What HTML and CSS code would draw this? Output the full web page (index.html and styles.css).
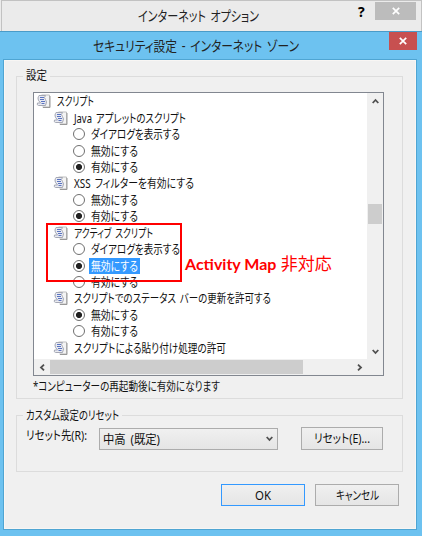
FILE: index.html
```html
<!DOCTYPE html>
<html lang="ja">
<head>
<meta charset="utf-8">
<title>セキュリティ設定 - インターネット ゾーン</title>
<link rel="stylesheet" href="styles.css">
</head>
<body>
<svg class="defs" width="0" height="0">
  <symbol id="script" viewBox="0 0 15 14">
    <path d="M5.500 1h8v12h-7" fill="#f4f4f4" stroke="#bdbdbd"/>
    <path d="M14 2v11.500H7" fill="none" stroke="#999"/>
    <path d="M3 1.500h6.500q-2 2 0 4t0 6H2.500q-2-.5-1-2.500h3q-3-3-2.500-5T3 1.500z" fill="#e8eaf2" stroke="#a5a8b4"/>
    <path d="M4 3.500h4M4 5.500h4M5 7.500h4M5.500 9.500h3" stroke="#5a73c0" stroke-width="1.100"/>
  </symbol>
</svg>
<main class="screen">
  <header class="back">
    <svg class="title" width="121" height="20"><text y="15" textLength="121" lengthAdjust="spacingAndGlyphs">インターネット オプション</text></svg>
    <b class="help">?</b>
    <span class="close gray"><svg width="8" height="8" viewBox="0 0 8 8"><path d="M.8.8l6.400 6.400M7.200.8L.8 7.200"/></svg></span>
  </header>
  <section class="dialog">
    <header class="bar">
      <svg class="title" width="206" height="20"><text y="15" textLength="206" lengthAdjust="spacingAndGlyphs">セキュリティ設定 - インターネット ゾーン</text></svg>
      <span class="close red"><svg width="8" height="8" viewBox="0 0 8 8"><path d="M.8.8l6.400 6.400M7.200.8L.8 7.200"/></svg></span>
    </header>
    <div class="client">
      <div class="group settings">
        <span class="legend"><svg width="21" height="16"><text y="12" textLength="21" lengthAdjust="spacingAndGlyphs">設定</text></svg></span>
        <div class="list">
          <div class="rows">
            <div class="row root"><svg class="icon"><use href="#script"/></svg><svg width="37" height="16"><text y="12.500" textLength="37" lengthAdjust="spacingAndGlyphs">スクリプト</text></svg></div>
            <div class="row"><svg class="icon"><use href="#script"/></svg><svg width="112" height="16"><text y="12.500" textLength="112" lengthAdjust="spacingAndGlyphs">Java アプレットのスクリプト</text></svg></div>
            <div class="row opt"><i class="radio"></i><svg width="89" height="16"><text y="12.500" textLength="89" lengthAdjust="spacingAndGlyphs">ダイアログを表示する</text></svg></div>
            <div class="row opt"><i class="radio"></i><svg width="47" height="16"><text y="12.500" textLength="47" lengthAdjust="spacingAndGlyphs">無効にする</text></svg></div>
            <div class="row opt"><i class="radio on"></i><svg width="47" height="16"><text y="12.500" textLength="47" lengthAdjust="spacingAndGlyphs">有効にする</text></svg></div>
            <div class="row"><svg class="icon"><use href="#script"/></svg><svg width="120" height="16"><text y="12.500" textLength="120" lengthAdjust="spacingAndGlyphs">XSS フィルターを有効にする</text></svg></div>
            <div class="row opt"><i class="radio"></i><svg width="47" height="16"><text y="12.500" textLength="47" lengthAdjust="spacingAndGlyphs">無効にする</text></svg></div>
            <div class="row opt"><i class="radio on"></i><svg width="47" height="16"><text y="12.500" textLength="47" lengthAdjust="spacingAndGlyphs">有効にする</text></svg></div>
            <div class="row"><svg class="icon"><use href="#script"/></svg><svg width="79" height="16"><text y="12.500" textLength="79" lengthAdjust="spacingAndGlyphs">アクティブ スクリプト</text></svg></div>
            <div class="row opt"><i class="radio"></i><svg width="89" height="16"><text y="12.500" textLength="89" lengthAdjust="spacingAndGlyphs">ダイアログを表示する</text></svg></div>
            <div class="row opt"><i class="radio on"></i><span class="selected"><svg width="47" height="16"><text y="12.500" textLength="47" lengthAdjust="spacingAndGlyphs">無効にする</text></svg></span></div>
            <div class="row opt"><i class="radio"></i><svg width="47" height="16"><text y="12.500" textLength="47" lengthAdjust="spacingAndGlyphs">有効にする</text></svg></div>
            <div class="row"><svg class="icon"><use href="#script"/></svg><svg width="197" height="16"><text y="12.500" textLength="197" lengthAdjust="spacingAndGlyphs">スクリプトでのステータス バーの更新を許可する</text></svg></div>
            <div class="row opt"><i class="radio on"></i><svg width="47" height="16"><text y="12.500" textLength="47" lengthAdjust="spacingAndGlyphs">無効にする</text></svg></div>
            <div class="row opt"><i class="radio"></i><svg width="47" height="16"><text y="12.500" textLength="47" lengthAdjust="spacingAndGlyphs">有効にする</text></svg></div>
            <div class="row"><svg class="icon"><use href="#script"/></svg><svg width="152" height="16"><text y="12.500" textLength="152" lengthAdjust="spacingAndGlyphs">スクリプトによる貼り付け処理の許可</text></svg></div>
          </div>
          <div class="vbar">
            <svg class="arrow" width="7" height="6"><path d="M.7 5l2.800-3 2.800 3"/></svg>
            <i class="vthumb"></i>
            <svg class="arrow" width="7" height="6"><path d="M.7 1l2.800 3 2.800-3"/></svg>
          </div>
          <div class="hbar">
            <svg class="arrow" width="6" height="7"><path d="M5 .7l-3 2.800 3 2.800"/></svg>
            <i class="hthumb"></i>
            <svg class="arrow" width="6" height="7"><path d="M1 .7l3 2.800-3 2.800"/></svg>
          </div>
        </div>
        <div class="note"><svg width="187" height="16"><text y="12" textLength="187" lengthAdjust="spacingAndGlyphs">*コンピューターの再起動後に有効になります</text></svg></div>
      </div>
      <div class="group reset">
        <span class="legend"><svg width="93" height="16"><text y="12" textLength="93" lengthAdjust="spacingAndGlyphs">カスタム設定のリセット</text></svg></span>
        <svg class="label" width="61" height="16"><text y="12" textLength="61" lengthAdjust="spacingAndGlyphs">リセット先(R):</text></svg>
        <div class="select"><svg width="57" height="16"><text y="12.500" textLength="57" lengthAdjust="spacingAndGlyphs">中高 (既定)</text></svg><svg class="arrow" width="7" height="6"><path d="M.7 1l2.800 3 2.800-3"/></svg></div>
        <div class="button small"><svg width="56" height="16"><text y="12" textLength="56" lengthAdjust="spacingAndGlyphs">リセット(E)...</text></svg></div>
      </div>
      <footer class="actions">
        <div class="button ok"><svg width="16" height="16"><text y="12.500" textLength="16" lengthAdjust="spacingAndGlyphs">OK</text></svg></div>
        <div class="button"><svg width="43" height="16"><text y="12.500" textLength="43" lengthAdjust="spacingAndGlyphs">キャンセル</text></svg></div>
      </footer>
    </div>
  </section>
  <div class="frame"></div>
  <div class="callout"><b>Activity Map</b> 非対応</div>
</main>
</body>
</html>
```
FILE: styles.css
```css
* { box-sizing: border-box; }
body { margin: 0; }
svg { display: block; flex: none; overflow: visible; }
.defs { position: absolute; }
.screen {
  position: relative;
  width: 422px;
  height: 536px;
  overflow: hidden;
  background: #ebebeb;
  font: 12px "Noto Sans", "Noto Sans CJK JP", sans-serif;
  font-feature-settings: "palt";
  color: #111;
}
text { fill: #111; font-size: 12px; word-spacing: 2px; }
.title text { font-size: 14px; fill: #222; }
.back {
  display: flex;
  height: 31px;
  padding: 5px 5px 0 136px;
  border: solid #c2c2c2;
  border-width: 1px 1px 0;
  margin-left: 1px;
}
.help { margin: -4px 0 0 99px; font-size: 14px; line-height: 19px; width: 8px; color: #000; }
.close { display: flex; align-items: center; justify-content: center; flex: none; }
.close path { fill: none; stroke: #fff; stroke-width: 1.7; }
.gray { width: 41px; height: 18px; margin: -4px 0 0 auto; background: #bcbcbc; }
.dialog {
  height: 505px;
  padding: 0 5px 0 3px;
  border-top: 1px solid #4a9bc8;
  background: #6dc2f0;
}
.bar { display: flex; height: 27px; padding: 4px 0 0 90px; }
.red { width: 28px; height: 18px; margin: -4px 0 0 auto; background: #c75050; }
.client {
  height: 471px;
  padding: 16px 13px 0 12px;
  border: 1px solid #4fa5d3;
  background: #f0f0f0;
  box-shadow: inset 0 0 0 1px #f8f6f4;
}
.group { position: relative; border: 1px solid #dcdcdc; }
.legend { position: absolute; top: -9px; left: 6px; padding: 0 3px; background: #f0f0f0; }
.settings { height: 323px; padding: 15px 16px 0; }
.list {
  display: grid;
  grid-template: 266px 16px / 333px 16px;
  width: 351px;
  height: 284px;
  border: 1px solid #828790;
  background: #fff;
}
.rows { padding: 0 0 0 20px; }
.row { display: flex; align-items: center; gap: 5px; height: 16.450px; }
.row.root { margin-left: -17px; }
.opt { padding-left: 19px; gap: 6px; }
.icon { width: 15px; height: 14px; }
.row .icon { margin: 0 1px 0 -1px; }
.radio {
  flex: none;
  width: 12px;
  height: 12px;
  border: 1px solid #707070;
  border-radius: 50%;
  background: #fff;
}
.on { background: radial-gradient(circle, #222 0 2.700px, #fff 3.400px); }
.selected { padding: 0 2px; margin-left: -2px; background: #3399ff; }
.selected text { fill: #fff; }
.vbar {
  display: flex;
  flex-direction: column;
  align-items: center;
  justify-content: space-between;
  padding: 5px 0 4px;
  background: #f0f0f0;
}
.vthumb { width: 14px; height: 20px; margin: 100px 0 auto; background: #cdcdcd; }
.arrow path { fill: none; stroke: #505050; stroke-width: 1.8; }
.hbar { grid-column: 1 / 3; display: flex; align-items: center; padding: 0 20px 0 5px; background: #f0f0f0; }
.hthumb { width: 253px; height: 14px; margin: 0 auto 0 5px; background: #cdcdcd; }
.note { margin-top: 3px; }
.reset { display: flex; height: 57px; margin-top: 16px; }
.reset .legend { top: -8px; }
.label { margin: 12px 0 0 9px; }
.select {
  display: flex;
  align-items: center;
  justify-content: space-between;
  width: 179px;
  height: 22px;
  margin: 12px 0 0 12px;
  padding: 0 4px 0 3px;
  border: 1px solid #acacac;
  background: linear-gradient(#f0f0f0, #e5e5e5);
}
.button {
  display: flex;
  align-items: center;
  justify-content: center;
  width: 84px;
  height: 22px;
  border: 1px solid #acacac;
  background: linear-gradient(#f0f0f0, #e5e5e5);
}
.small { width: 82px; height: 23px; margin: 11px 0 0 23px; }
.actions { display: flex; justify-content: flex-end; gap: 10px; padding-right: 4px; margin-top: 12px; }
.ok { border-color: #3399ff; }
.frame {
  position: absolute;
  left: 46px;
  top: 223px;
  width: 136px;
  height: 59px;
  border: 2px solid #f00;
}
.callout {
  position: absolute;
  left: 185px;
  top: 251px;
  font: 17px/26px Lato, "Noto Sans CJK JP", sans-serif;
  font-feature-settings: normal;
  white-space: nowrap;
  color: #f00;
}
.callout b { font-size: 16px; }
```
